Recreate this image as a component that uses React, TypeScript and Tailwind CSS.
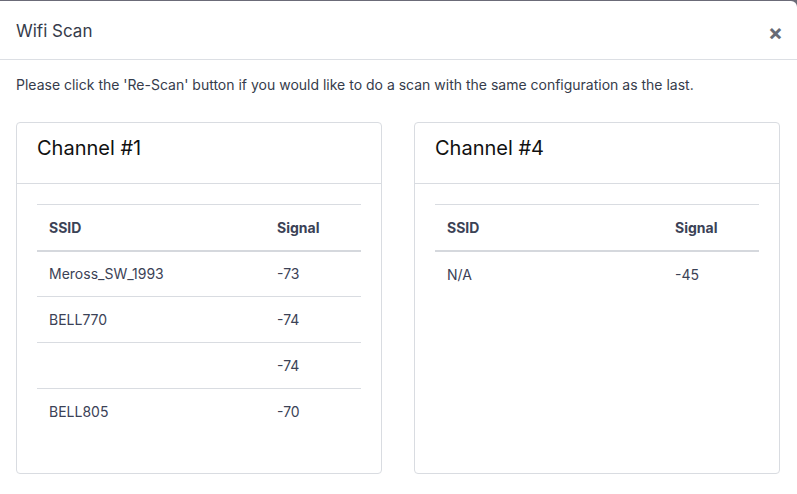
import React from 'react'

type Row = { ssid: string; signal: string }

const channels: { name: string; rows: Row[] }[] = [
  {
    name: 'Channel #1',
    rows: [
      { ssid: 'Meross_SW_1993', signal: '-73' },
      { ssid: 'BELL770', signal: '-74' },
      { ssid: '', signal: '-74' },
      { ssid: 'BELL805', signal: '-70' },
    ],
  },
  {
    name: 'Channel #4',
    rows: [{ ssid: 'N/A', signal: '-45' }],
  },
]

const ChannelCard: React.FC<{ name: string; rows: Row[] }> = ({ name, rows }) => {
  return (
    <div className="flex-1 rounded-[4px] border border-[#d9dce1] bg-white">
      <div className="border-b border-[#d9dce1] px-5 pb-[21px] pt-[11px]">
        <h5 className="text-[20px] leading-[28px] text-[#111]">{name}</h5>
      </div>
      <div className="px-5 pb-[38px] pt-5">
        <table className="w-full border-collapse text-[14px] text-[#3b4256]">
          <thead>
            <tr className="border-t border-[#d9dce1]">
              <th className="h-[46px] w-[228px] px-3 text-left font-bold">SSID</th>
              <th className="h-[46px] px-3 text-left font-bold">Signal</th>
            </tr>
          </thead>
          <tbody className="border-t-2 border-[#d5d8dd]">
            {rows.map((r, i) => (
              <tr
                key={i}
                className={i < rows.length - 1 ? 'border-b border-[#d9dce1]' : ''}
              >
                <td className="h-[46px] px-3">{r.ssid}</td>
                <td className="h-[46px] px-3">{r.signal}</td>
              </tr>
            ))}
          </tbody>
        </table>
      </div>
    </div>
  )
}

const App: React.FC = () => {
  return (
    <div className="h-[494px] w-[797px] overflow-hidden bg-[#6b6b78] pt-px font-['Inter',sans-serif]">
      <div className="h-full rounded-tr-[6px] bg-white">
        <div className="flex h-[59px] items-center justify-between border-b border-[#dcdfe4] px-4 pt-[4px]">
          <h3 className="text-[17px] text-[#363c4b]">Wifi Scan</h3>
          <button className="mr-[-2px] text-[22px] font-bold leading-none text-[#676b75]">×</button>
        </div>
        <div className="px-4 pt-[15px]">
          <p className="text-[14px] leading-[20px] text-[#363c4b]">
            Please click the 'Re-Scan' button if you would like to do a scan with the same configuration as the last.
          </p>
          <div className="mt-[27px] flex gap-8 pr-px">
            {channels.map((c) => (
              <ChannelCard key={c.name} name={c.name} rows={c.rows} />
            ))}
          </div>
        </div>
      </div>
    </div>
  )
}

export default App
